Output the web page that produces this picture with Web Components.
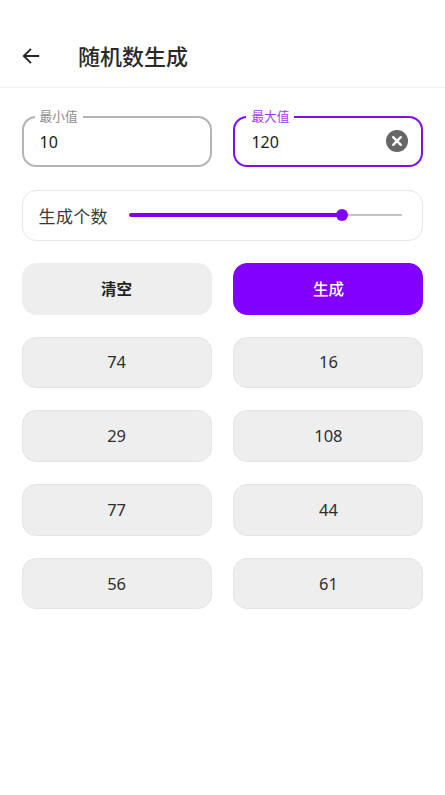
<!DOCTYPE html>
<html lang="zh"><head><meta charset="utf-8"><title>随机数生成</title>
<style>
html,body{margin:0;background:#fff}
body{font-family:"Noto Sans","Noto Sans CJK SC",sans-serif;color:#1d1d1d}
</style></head><body>
<app-page></app-page>
<script>
const def=(name,css,html)=>customElements.define(name,class extends HTMLElement{
  connectedCallback(){ if(this.shadowRoot) return; const r=this.attachShadow({mode:'open'}); r.innerHTML=`<style>${css}</style>${html(this)}`; }
});
def('app-header',`:host{display:flex;align-items:center;height:88px;border-bottom:1px solid #f0f0f0;padding:24.5px 0 0 21.5px;box-sizing:border-box}
svg{width:18px;height:18px;display:block;flex:none}
h1{margin:0 0 0 38.5px;font:500 22px/30px "Noto Sans CJK SC",sans-serif;color:#2a2a2a;position:relative;top:-.5px}`,
e=>`<svg viewBox="0 0 18 18" fill="none" stroke="#262626" stroke-width="1.9"><path d="M17.2 9H1.8M9 1.8 1.8 9 9 16.2"/></svg><h1>${e.getAttribute('heading')}</h1>`);
def('num-field',`:host{display:block;position:relative;height:51.3px;box-sizing:border-box;border:2px solid #b4b4b4;border-radius:14px}
:host([focus]){border-color:#7d10e8}
label{position:absolute;left:11px;top:-9.5px;padding:0 5px;background:#fff;font:12.7px/16px "Noto Sans CJK SC",sans-serif;color:#8c8c8c}
:host([focus]) label{color:#9a3fe6}
.row{display:flex;align-items:center;justify-content:space-between;height:100%;padding:1px 13.5px 0 16px;box-sizing:border-box}
span{font:16px/22px "Noto Sans",sans-serif;color:#1a1a1a}
svg{width:22px;height:22px;display:block;margin-top:-1px}`,
e=>`<label>${e.getAttribute('label')}</label><div class="row"><span>${e.getAttribute('value')}</span>${e.hasAttribute('focus')?`<svg viewBox="0 0 22 22"><circle cx="11" cy="11" r="11" fill="#666"/><path d="M7.2 7.2l7.6 7.6M14.8 7.2l-7.6 7.6" stroke="#fff" stroke-width="2.4" stroke-linecap="round"/></svg>`:''}</div>`);
def('count-slider',`:host{display:flex;align-items:center;grid-column:1/-1;height:51.3px;margin-top:.5px;box-sizing:border-box;border:1px solid #e6e6e6;border-radius:14px;padding:0 20px 0 16px}
span{font:17px/22px "Noto Sans CJK SC",sans-serif;color:#3a3a3a;letter-spacing:.3px;flex:none;padding-top:1px}
.t{flex:1;margin-left:21px;height:12px;display:flex;align-items:center;position:relative}
.a{width:213px;height:4.5px;background:#8000f0;border-radius:3px 0 0 3px}
.b{flex:1;height:1.5px;background:#c4c4c4}
.k{position:absolute;left:207px;top:0;width:12px;height:12px;border-radius:50%;background:#8000f0}`,
e=>`<span>生成个数</span><div class="t"><div class="a"></div><div class="b"></div><div class="k"></div></div>`);
def('pill-btn',`:host{display:flex;align-items:center;justify-content:center;height:51.6px;box-sizing:border-box;border-radius:14px;background:#eee;border:1px solid #e4e4e4;font:16.5px/22px "Noto Sans",sans-serif;color:#2e2e2e}
:host([kind=plain]){border-color:#eee;font:700 15.5px/22px "Noto Sans CJK SC",sans-serif;color:#222;padding-bottom:1.5px}
:host([kind=primary]){background:#8200ff;border-color:#8200ff;color:#fff;font:500 15.5px/22px "Noto Sans CJK SC",sans-serif;padding-bottom:1.5px}`,
e=>`<slot></slot>`);
def('app-page',`:host{display:block;width:445px;min-height:795px;background:#fff}
main{display:grid;grid-template-columns:190px 190px;column-gap:21.8px;row-gap:22.1px;padding:27.7px 0 0 21.6px}`,
e=>`<app-header heading="随机数生成"></app-header><main>
<num-field label="最小值" value="10"></num-field>
<num-field label="最大值" value="120" focus></num-field>
<count-slider></count-slider>
<pill-btn kind="plain">清空</pill-btn><pill-btn kind="primary">生成</pill-btn>
<pill-btn>74</pill-btn><pill-btn>16</pill-btn>
<pill-btn>29</pill-btn><pill-btn>108</pill-btn>
<pill-btn>77</pill-btn><pill-btn>44</pill-btn>
<pill-btn>56</pill-btn><pill-btn>61</pill-btn>
</main>`);
</script>
</body></html>
